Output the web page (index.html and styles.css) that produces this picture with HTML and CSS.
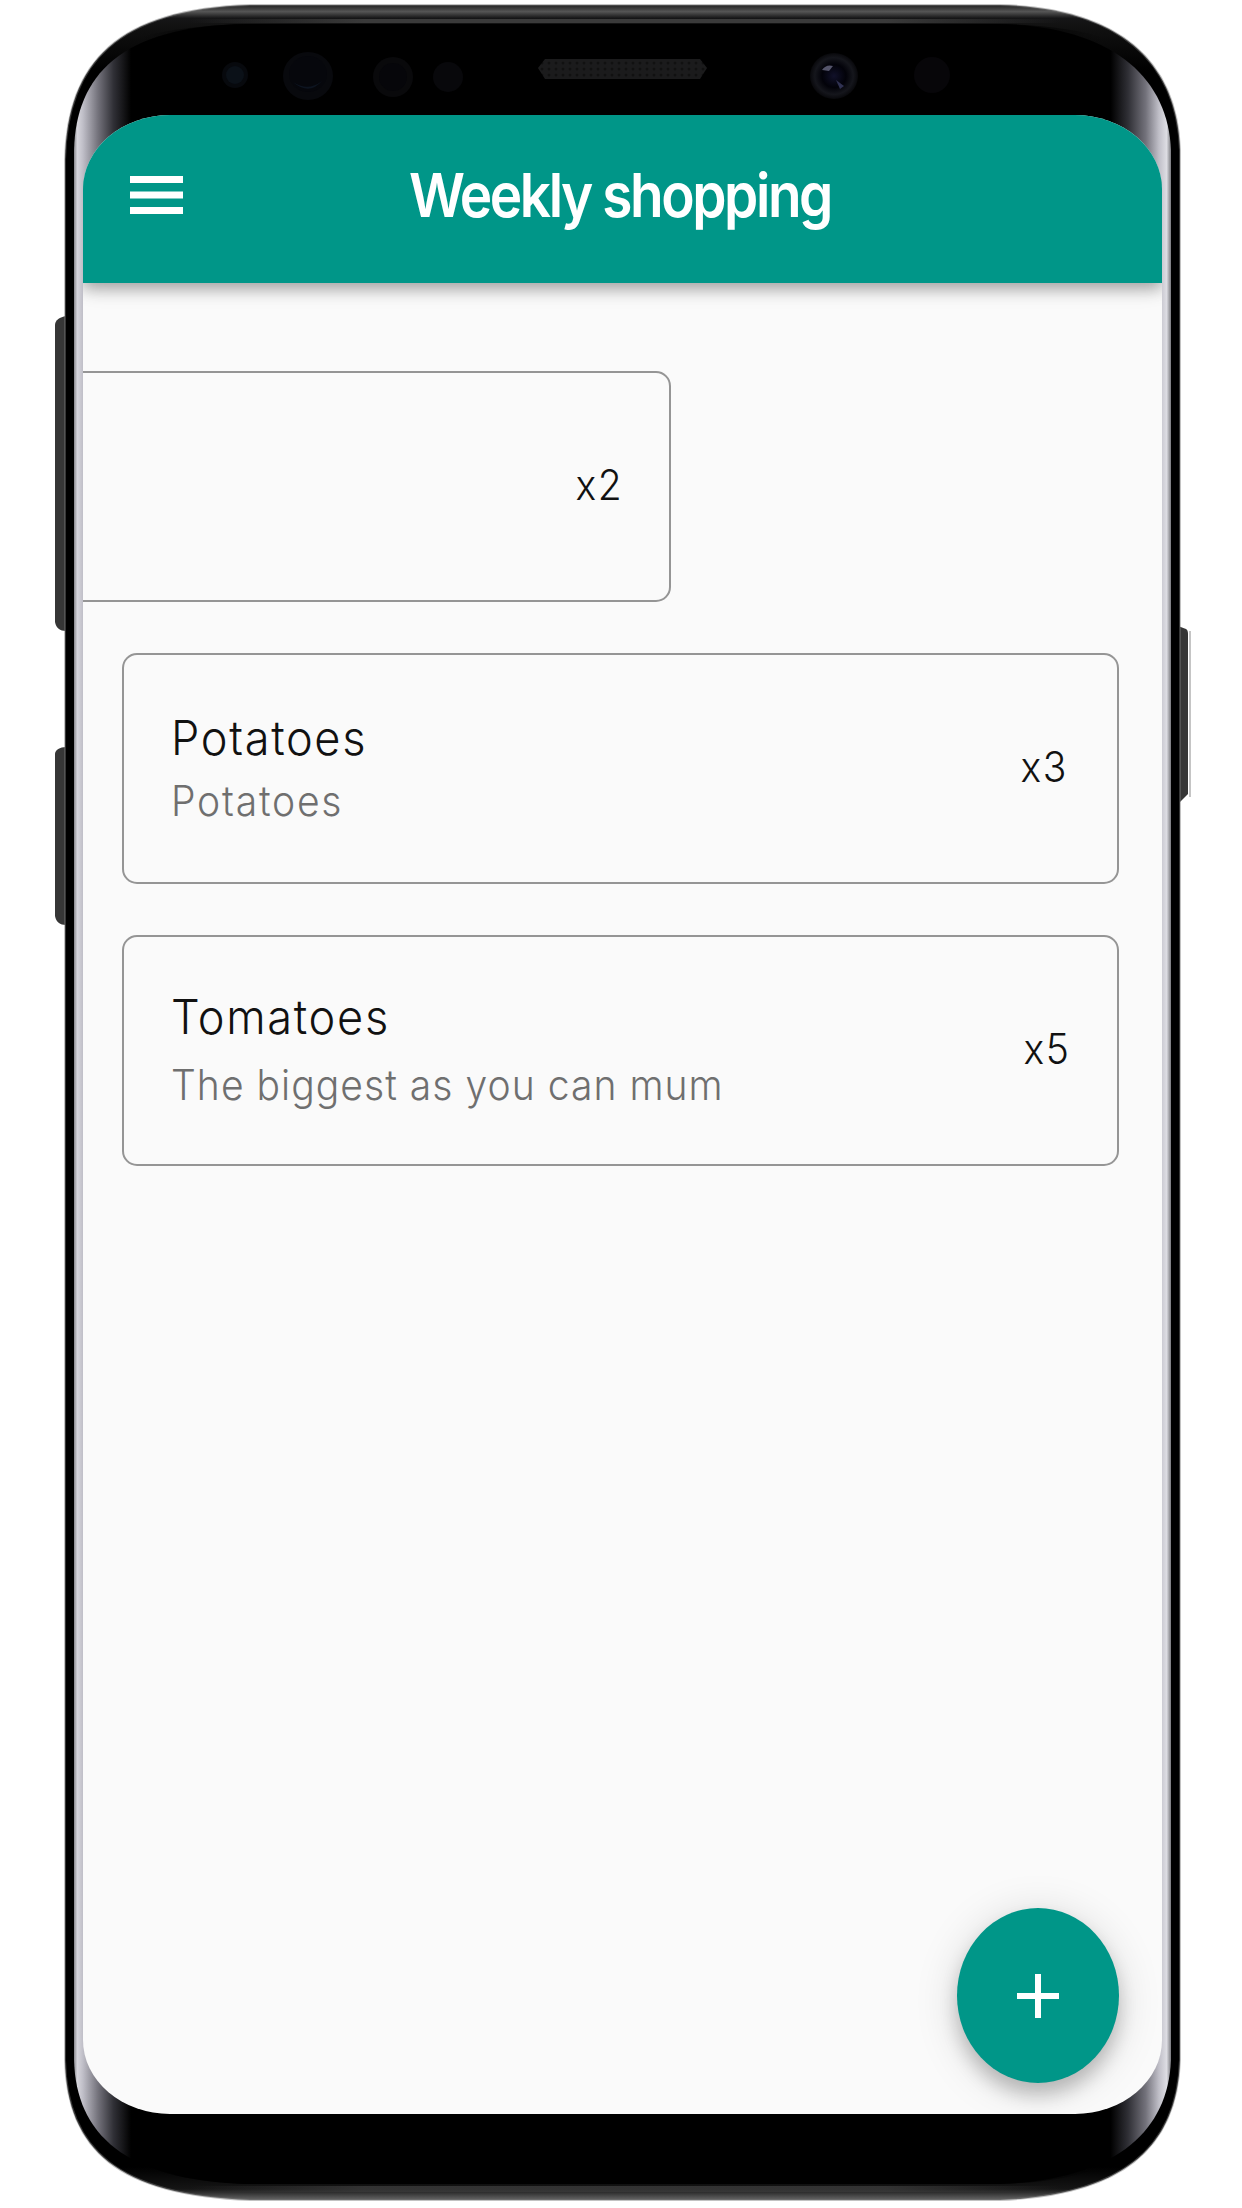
FILE: index.html
```html
<!DOCTYPE html>
<html lang="en">
<head>
<meta charset="utf-8">
<title>Weekly shopping</title>
<link rel="stylesheet" href="styles.css">
</head>
<body>
<div class="device">
  <svg class="frame" viewBox="0 0 1242 2208" aria-hidden="true">
    <defs>
      <linearGradient id="face" gradientUnits="userSpaceOnUse" x1="74" y1="0" x2="1171" y2="0">
        <stop offset="0" stop-color="#88888d"/><stop offset=".003" stop-color="#d6d5dc"/><stop offset=".008" stop-color="#c0bfc8"/>
        <stop offset=".022" stop-color="#73727b"/><stop offset=".036" stop-color="#303036"/><stop offset=".052" stop-color="#000"/>
        <stop offset=".945" stop-color="#000"/><stop offset=".961" stop-color="#303036"/><stop offset=".977" stop-color="#73727b"/>
        <stop offset=".989" stop-color="#c0bfc8"/><stop offset=".996" stop-color="#dddde3"/><stop offset="1" stop-color="#77777c"/>
      </linearGradient>
      <linearGradient id="shell" x1="0" y1="0" x2="0" y2="1">
        <stop offset="0" stop-color="#222"/><stop offset=".003" stop-color="#555"/><stop offset=".006" stop-color="#161617"/>
        <stop offset=".01" stop-color="#111"/><stop offset=".03" stop-color="#000"/><stop offset=".985" stop-color="#000"/>
        <stop offset=".995" stop-color="#151515"/><stop offset="1" stop-color="#666"/>
      </linearGradient>
      <linearGradient id="cap" x1="0" y1="0" x2="1" y2="0">
        <stop offset="0" stop-color="#000" stop-opacity="0"/><stop offset=".12" stop-color="#000"/>
        <stop offset=".88" stop-color="#000"/><stop offset="1" stop-color="#000" stop-opacity="0"/>
      </linearGradient>
      <linearGradient id="edge" x1="0" y1="0" x2="1" y2="0">
        <stop offset="0" stop-color="#3a3a3a" stop-opacity="0"/><stop offset=".2" stop-color="#3a3a3a"/>
        <stop offset=".8" stop-color="#3a3a3a"/><stop offset="1" stop-color="#3a3a3a" stop-opacity="0"/>
      </linearGradient>
      <radialGradient id="lens"><stop offset="0" stop-color="#11112a"/><stop offset=".5" stop-color="#020209"/><stop offset=".8" stop-color="#15161c"/><stop offset="1" stop-color="#08080b"/></radialGradient>
      <pattern id="mesh" width="7" height="6" patternUnits="userSpaceOnUse"><rect width="7" height="6" fill="#1b1b1c"/><circle cx="3" cy="3" r="1.5" fill="#111"/></pattern>
    </defs>
    <g fill="#363636">
      <path d="M66 316C60 317 55 320 55 325V622C56 628 60 631 66 631Z"/>
      <path d="M66 747C60 747 55 750 55 754V916C56 922 60 925 66 925Z"/>
      <path d="M1178 626L1186 629Q1188 630 1188 634V794L1178 804Z"/>
    </g>
    <path d="M1190 631V797" stroke="#c5c5c5" stroke-width="2"/>
    <path fill="url(#shell)" stroke="#777" stroke-opacity=".45" stroke-width="2" d="M65 160C67 62 118 9 250 5H1000C1120 8 1177 62 1180 150V2060C1177 2150 1120 2195 1000 2200H250C118 2195 67 2150 65 2060Z"/>
    <path fill="url(#face)" d="M74 150C76 76 120 26 245 24H1000C1110 26 1168 76 1171 150V2060C1168 2134 1112 2180 1000 2184H245C125 2180 76 2134 74 2060Z"/>
    <path fill="url(#cap)" d="M140 37Q190 24 260 24H990Q1060 24 1105 38V60H140Z"/>
    <path fill="url(#cap)" d="M140 2165Q190 2184 260 2184H990Q1060 2184 1105 2166V2140H140Z"/>
    <rect x="190" y="19" width="870" height="4" fill="url(#edge)"/>
    <rect x="190" y="2186" width="870" height="6" fill="url(#edge)" opacity=".8"/>
    <circle cx="235" cy="75" r="13" fill="#07090d"/><circle cx="235" cy="75" r="9" fill="#0b1118"/>
    <ellipse cx="308" cy="76" rx="25" ry="24" fill="#08090d"/><ellipse cx="308" cy="74" rx="19" ry="18" fill="#06070c"/>
    <path d="M293 82Q308 92 322 81Q309 96 293 82Z" fill="#0d1420"/>
    <circle cx="393" cy="77" r="20" fill="#09090b"/><circle cx="393" cy="77" r="14" fill="#06060a"/>
    <circle cx="448" cy="77" r="15" fill="#08080b"/>
    <path d="M545 59H700L707 68L700 79H545L538 68Z" fill="url(#mesh)"/>
    <ellipse cx="834" cy="76" rx="24" ry="23" fill="url(#lens)"/>
    <path d="M822 70Q826 64 833 66L829 71Z" fill="#55556b"/><path d="M836 80L844 86L840 89Z" fill="#303252"/>
    <circle cx="932" cy="75" r="18" fill="#070609"/>
  </svg>
  <div class="screen">
    <header class="bar">
      <svg class="menu" viewBox="0 0 53 38" aria-label="Menu"><path fill="#fff" d="M0 0H53V7H0ZM0 15.5H53V22.5H0ZM0 31H53V38H0Z"/></svg>
      <h1 class="title">Weekly shopping</h1>
    </header>
    <main class="list">
      <article class="card swiped"><span class="qty">x2</span></article>
      <article class="card">
        <div class="text"><h2 class="name">Potatoes</h2><p class="note">Potatoes</p></div>
        <span class="qty">x3</span>
      </article>
      <article class="card last">
        <div class="text"><h2 class="name">Tomatoes</h2><p class="note">The biggest as you can mum</p></div>
        <span class="qty">x5</span>
      </article>
    </main>
    <button class="fab" aria-label="Add"><svg viewBox="0 0 42 44" width="42" height="44"><path fill="#fff" d="M18 0H24V19H42V25H24V44H18V25H0V19H18Z"/></svg></button>
  </div>
</div>
</body>
</html>
```
FILE: styles.css
```css
* { box-sizing: border-box; }
body { margin: 0; background: #fff; font-family: Inter, "Liberation Sans", sans-serif; }
h1, h2, p { margin: 0; }
.device { position: relative; width: 1242px; height: 2208px; padding: 115px 80px 94px 83px; overflow: hidden; }
.frame { position: absolute; inset: 0; width: 1242px; height: 2208px; }
.screen { position: relative; width: 1079px; height: 1999px; background: #fafafa; border-radius: 87px / 74px; overflow: hidden; }
.bar { position: relative; display: flex; align-items: center; height: 168px; padding: 0 47px; background: #009688; box-shadow: 0 6px 14px rgba(0,0,0,.28), 0 2px 24px rgba(0,0,0,.14); }
.menu { width: 53px; height: 38px; margin-top: -8px; }
.title { margin: -8px 0 0 226px; color: #fff; font-size: 61px; line-height: 74px; font-weight: 600; letter-spacing: -2.7px; white-space: nowrap; transform: scaleX(.9); transform-origin: left; }
.list { display: flex; flex-direction: column; gap: 51px; padding: 88px 43px 0 39px; }
.card { display: flex; align-items: center; justify-content: space-between; height: 231px; padding: 0 49px 0 47px; border: 2px solid #959595; border-radius: 15px; }
.swiped { width: 997px; margin-left: -448px; padding-right: 46px; justify-content: flex-end; }
.text { padding-top: 2px; }
.name, .note, .qty { font-weight: 300; white-space: nowrap; }
.name { color: #111; font-size: 48px; line-height: 62px; letter-spacing: 1.8px; transform: scaleX(.94); transform-origin: left; }
.note { margin-top: 1px; color: #6f6f6f; font-size: 42px; line-height: 62px; letter-spacing: 1.9px; transform: scaleX(.93); transform-origin: left; }
.last .name { margin-top: -1px; }
.last .note { margin-top: 6px; letter-spacing: 1.1px; }
.qty { margin-top: -3px; color: #111; font-size: 42px; line-height: 50px; letter-spacing: 1.5px; transform: scaleX(.93); transform-origin: right; }
.last .qty { margin-right: -2px; }
.fab { position: absolute; right: 43px; bottom: 31px; display: flex; align-items: center; justify-content: center; width: 162px; height: 175px; padding: 0; border: 0; border-radius: 50%; background: #009688; box-shadow: 0 12px 18px rgba(0,0,0,.2), 0 6px 44px rgba(0,0,0,.15); }
```
